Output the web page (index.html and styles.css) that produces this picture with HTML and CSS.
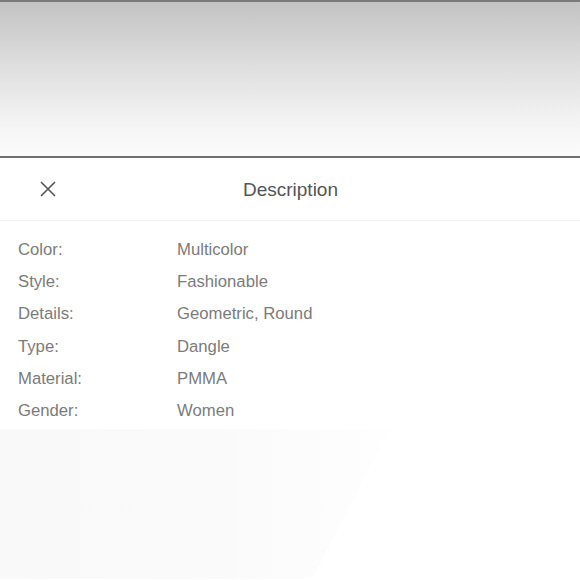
FILE: index.html
```html
<!DOCTYPE html>
<html>
<head>
<meta charset="utf-8">
<link rel="stylesheet" href="styles.css">
</head>
<body>
<div class="page">
  <div class="backdrop"></div>
  <div class="sheet">
    <div class="header">
      <svg class="close" width="18" height="18" viewBox="0 0 18 18"><path d="M2 2 L16 16 M16 2 L2 16" stroke="#555" stroke-width="1.6" fill="none"/></svg>
      <div class="title">Description</div>
    </div>
    <div class="specs">
      <div class="row"><span class="label">Color:</span><span class="value">Multicolor</span></div>
      <div class="row"><span class="label">Style:</span><span class="value">Fashionable</span></div>
      <div class="row"><span class="label">Details:</span><span class="value">Geometric, Round</span></div>
      <div class="row"><span class="label">Type:</span><span class="value">Dangle</span></div>
      <div class="row"><span class="label">Material:</span><span class="value">PMMA</span></div>
      <div class="row"><span class="label">Gender:</span><span class="value">Women</span></div>
    </div>
    <div class="ghost"></div>
  </div>
</div>
</body>
</html>
```
FILE: styles.css
```css
html, body {
  margin: 0;
  padding: 0;
  background: #ffffff;
}
.page {
  width: 580px;
  height: 580px;
  overflow: hidden;
  display: flex;
  flex-direction: column;
  font-family: "Liberation Sans", Arial, sans-serif;
}
.backdrop {
  height: 154px;
  border-top: 2px solid #7a7a7a;
  border-bottom: 2px solid #707070;
  background: linear-gradient(to bottom, #c3c3c3 0%, #dadada 35%, #f2f2f2 75%, #fcfcfc 100%);
  flex: none;
}
.sheet {
  flex: 1;
  background: #ffffff;
  display: flex;
  flex-direction: column;
}
.header {
  height: 62px;
  border-bottom: 1px solid #f1f1f1;
  display: flex;
  align-items: center;
  justify-content: center;
  position: relative;
}
.close {
  position: absolute;
  left: 39px;
  top: 22px;
}
.title {
  font-size: 19px;
  color: #555555;
  margin-left: 1px;
  margin-top: 1px;
}
.specs {
  padding: 13px 0 0 18px;
  display: flex;
  flex-direction: column;
}
.row {
  display: flex;
  height: 32.2px;
  align-items: center;
  font-size: 16.7px;
  color: #7b7b7b;
}
.label {
  width: 159px;
}
.ghost {
  margin-top: 2px;
  height: 150px;
  width: 390px;
  background: linear-gradient(to right, #f9f9f9 0%, #fafafa 55%, #fefefe 100%);
  clip-path: polygon(0 0, 100% 0, 80% 100%, 0 100%);
}
```
